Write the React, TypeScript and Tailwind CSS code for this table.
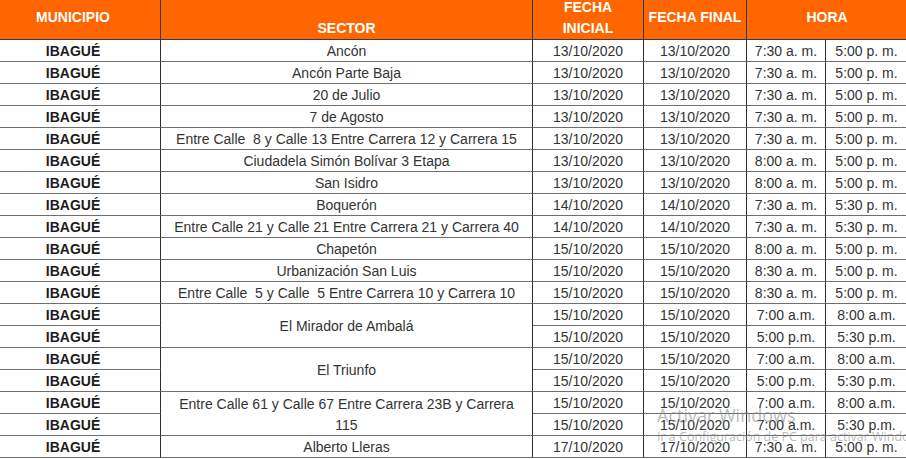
import React from "react";

type Row = {
  sector?: string;
  span?: boolean;
  inicio: string;
  fin: string;
  desde: string;
  hasta: string;
};

const rows: Row[] = [
  { sector: "Ancón", inicio: "13/10/2020", fin: "13/10/2020", desde: "7:30 a. m.", hasta: "5:00 p. m." },
  { sector: "Ancón Parte Baja", inicio: "13/10/2020", fin: "13/10/2020", desde: "7:30 a. m.", hasta: "5:00 p. m." },
  { sector: "20 de Julio", inicio: "13/10/2020", fin: "13/10/2020", desde: "7:30 a. m.", hasta: "5:00 p. m." },
  { sector: "7 de Agosto", inicio: "13/10/2020", fin: "13/10/2020", desde: "7:30 a. m.", hasta: "5:00 p. m." },
  { sector: "Entre Calle  8 y Calle 13 Entre Carrera 12 y Carrera 15", inicio: "13/10/2020", fin: "13/10/2020", desde: "7:30 a. m.", hasta: "5:00 p. m." },
  { sector: "Ciudadela Simón Bolívar 3 Etapa", inicio: "13/10/2020", fin: "13/10/2020", desde: "8:00 a. m.", hasta: "5:00 p. m." },
  { sector: "San Isidro", inicio: "13/10/2020", fin: "13/10/2020", desde: "8:00 a. m.", hasta: "5:00 p. m." },
  { sector: "Boquerón", inicio: "14/10/2020", fin: "14/10/2020", desde: "7:30 a. m.", hasta: "5:30 p. m." },
  { sector: "Entre Calle 21 y Calle 21 Entre Carrera 21 y Carrera 40", inicio: "14/10/2020", fin: "14/10/2020", desde: "7:30 a. m.", hasta: "5:30 p. m." },
  { sector: "Chapetón", inicio: "15/10/2020", fin: "15/10/2020", desde: "8:00 a. m.", hasta: "5:00 p. m." },
  { sector: "Urbanización San Luis", inicio: "15/10/2020", fin: "15/10/2020", desde: "8:30 a. m.", hasta: "5:00 p. m." },
  { sector: "Entre Calle  5 y Calle  5 Entre Carrera 10 y Carrera 10", inicio: "15/10/2020", fin: "15/10/2020", desde: "8:30 a. m.", hasta: "5:00 p. m." },
  { sector: "El Mirador de Ambalá", span: true, inicio: "15/10/2020", fin: "15/10/2020", desde: "7:00 a.m.", hasta: "8:00 a.m." },
  { inicio: "15/10/2020", fin: "15/10/2020", desde: "5:00 p.m.", hasta: "5:30 p.m." },
  { sector: "El Triunfo", span: true, inicio: "15/10/2020", fin: "15/10/2020", desde: "7:00 a.m.", hasta: "8:00 a.m." },
  { inicio: "15/10/2020", fin: "15/10/2020", desde: "5:00 p.m.", hasta: "5:30 p.m." },
  { sector: "Entre Calle 61 y Calle 67 Entre Carrera 23B y Carrera 115", span: true, inicio: "15/10/2020", fin: "15/10/2020", desde: "7:00 a.m.", hasta: "8:00 a.m." },
  { inicio: "15/10/2020", fin: "15/10/2020", desde: "7:00 a.m.", hasta: "5:30 p.m." },
  { sector: "Alberto Lleras", inicio: "17/10/2020", fin: "17/10/2020", desde: "7:30 a. m.", hasta: "5:00 p. m." },
];

const cell =
  "flex items-center justify-center text-center pt-[2px] border-r border-b border-r-[#2e2e2e] border-b-[#6e6e6e] leading-[21px]";
const head =
  "flex flex-col items-center justify-start text-center border-r border-b border-[#3a3a3a] leading-[21px] font-bold text-white overflow-hidden";

export default function App() {
  return (
    <div className="relative w-[906px] h-[459px] overflow-hidden bg-white font-['Liberation_Sans',Arial,sans-serif] text-[14px] text-[#333]">
      <div className="ml-[-14px] grid grid-cols-[175px_372px_111px_103px_79px_82px] grid-rows-[40px] auto-rows-[22px]">
        {/* Header */}
        <div className={`${head} bg-[#ff6600] pt-[7px]`}>MUNICIPIO</div>
        <div className={`${head} bg-[#ff6600] pt-[18px]`}>SECTOR</div>
        <div className={`${head} bg-[#ff6600]`}>
          <span className="mt-[-3px]">FECHA</span>
          <span>INICIAL</span>
        </div>
        <div className={`${head} bg-[#ff6600] pt-[7px]`}>FECHA FINAL</div>
        <div className={`${head} col-span-2 bg-[#ff6600] pt-[7px]`}>HORA</div>

        {rows.map((r, i) => (
          <React.Fragment key={i}>
            <div className={`${cell} font-bold text-[#1c1c1c]`}>IBAGUÉ</div>
            {r.sector !== undefined && (
              <div className={`${cell} px-[6px] whitespace-pre-wrap ${r.span ? "row-span-2" : ""}`}>
                {r.sector}
              </div>
            )}
            <div className={cell}>{r.inicio}</div>
            <div className={cell}>{r.fin}</div>
            <div className={cell}>{r.desde}</div>
            <div className={cell}>{r.hasta}</div>
          </React.Fragment>
        ))}
      </div>

      {/* Windows activation watermark */}
      <div className="absolute left-[657px] top-[404px] pointer-events-none font-['Open_Sans',sans-serif] text-[rgba(140,140,140,0.6)] whitespace-nowrap">
        <div className="text-[18px] leading-[22px]">Activar Windows</div>
        <div className="text-[12.5px] leading-[18px] mt-[2px]">Ir a Configuración de PC para activar Windows</div>
      </div>
    </div>
  );
}
